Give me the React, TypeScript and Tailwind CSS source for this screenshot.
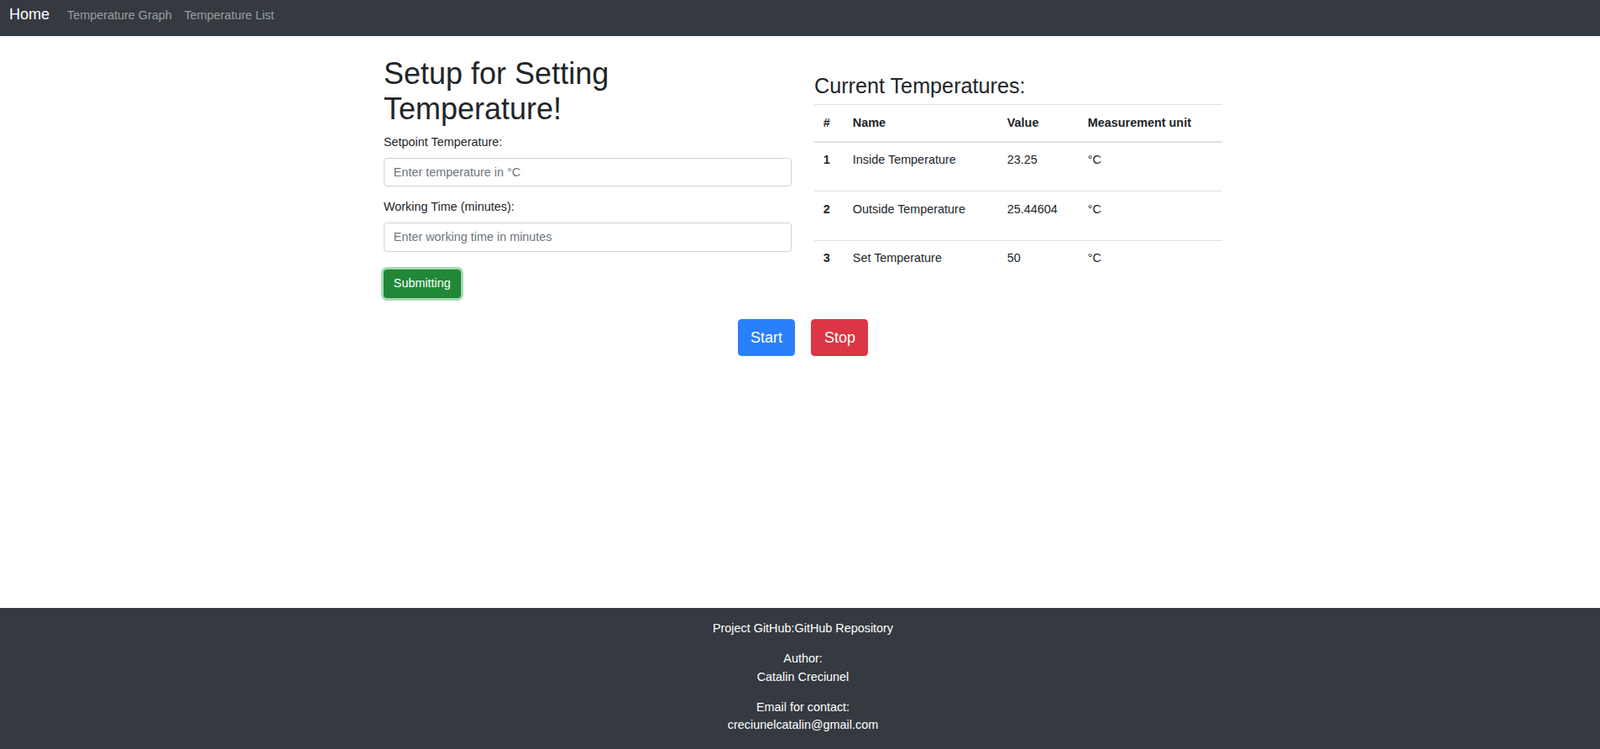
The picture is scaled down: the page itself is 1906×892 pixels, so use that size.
import React from "react";

const font = { fontFamily: '"Liberation Sans", Arial, sans-serif' };

export default function App() {
  const rows = [
    { n: "1", name: "Inside Temperature", value: "23.25", unit: "°C" },
    { n: "2", name: "Outside Temperature", value: "25.44604", unit: "°C" },
    { n: "3", name: "Set Temperature", value: "50", unit: "°C" },
  ];
  return (
    <div className="min-h-screen flex flex-col bg-white text-[#212529] font-['Liberation_Sans',Arial,sans-serif]" style={font}>
      <nav className="h-[43px] bg-[#343a40] flex items-baseline pt-[6.5px] shrink-0">
        <span className="ml-[11px] text-[18px] leading-[20px] text-white">Home</span>
        <span className="ml-[21px] text-[14.4px] leading-[20px] text-white/50">Temperature Graph</span>
        <span className="ml-[14.6px] text-[14.4px] leading-[20px] text-white/50">Temperature List</span>
      </nav>

      <main className="flex-1 pl-[7px]">
        <div className="w-[999px] mx-auto">
          <div className="grid grid-cols-2 gap-[27px] items-start mt-[23.6px]">
            <div>
              <h1 className="text-[36px] leading-[42px] font-normal mb-[8.2px] text-[#212529]">
                Setup for Setting Temperature!
              </h1>
              <label className="block text-[14.4px] leading-[21.6px] mb-[7.2px]">Setpoint Temperature:</label>
              <input
                type="text"
                placeholder="Enter temperature in °C"
                className="block w-full h-[34.2px] px-[10.8px] py-[5.4px] text-[14.4px] leading-[21.6px] border border-[#ced4da] rounded-[3.6px] placeholder:text-[#6c757d] outline-none"
              />
              <label className="block mt-[14.6px] text-[14.4px] leading-[21.6px] mb-[7.4px]">Working Time (minutes):</label>
              <input
                type="text"
                placeholder="Enter working time in minutes"
                className="block w-full h-[34.2px] px-[10.8px] py-[5.4px] text-[14.4px] leading-[21.6px] border border-[#ced4da] rounded-[3.6px] placeholder:text-[#6c757d] outline-none"
              />
              <button className="mt-[21.4px] px-[10.8px] py-[5.4px] text-[14.4px] leading-[21.6px] text-white bg-[#218838] border border-[#1e7e34] rounded-[3.6px] shadow-[0_0_0_2.9px_rgba(72,180,97,0.5)]">
                Submitting
              </button>
            </div>
            <div>
              <h3 className="mt-[20.4px] text-[25.2px] leading-[30.24px] font-normal mb-[6.4px]">Current Temperatures:</h3>
              <table className="w-full border-collapse table-fixed text-[14.4px] leading-[21.6px]">
                <thead>
                  <tr>
                    <th className="w-[35px] text-left align-bottom font-bold px-[10.8px] pt-[11.4px] pb-[10.2px] border-t border-b-2 border-[#dee2e6]">#</th>
                    <th className="w-[184px] text-left align-bottom font-bold px-[10.8px] pt-[11.4px] pb-[10.2px] border-t border-b-2 border-[#dee2e6]">Name</th>
                    <th className="w-[96px] text-left align-bottom font-bold px-[10.8px] pt-[11.4px] pb-[10.2px] border-t border-b-2 border-[#dee2e6]">Value</th>
                    <th className="text-left align-bottom font-bold px-[10.8px] pt-[11.4px] pb-[10.2px] border-t border-b-2 border-[#dee2e6]">Measurement unit</th>
                  </tr>
                </thead>
                <tbody>
                  {rows.map((r) => (
                    <tr key={r.n}>
                      <th className="text-left align-top font-bold px-[10.8px] pt-[10.4px] pb-[11.2px] border-t border-[#dee2e6]">
                        <p className="mb-[14.4px]">{r.n}</p>
                      </th>
                      <td className="align-top px-[10.8px] pt-[10.4px] pb-[11.2px] border-t border-[#dee2e6]">
                        <p className="mb-[14.4px]">{r.name}</p>
                      </td>
                      <td className="align-top px-[10.8px] pt-[10.4px] pb-[11.2px] border-t border-[#dee2e6]">
                        <p className="mb-[14.4px]">{r.value}</p>
                      </td>
                      <td className="align-top px-[10.8px] pt-[10.4px] pb-[11.2px] border-t border-[#dee2e6]">
                        <p className="mb-[14.4px]">{r.unit}</p>
                      </td>
                    </tr>
                  ))}
                </tbody>
              </table>
            </div>
          </div>
          <div className="flex justify-center gap-[19px] mt-[25.2px]">
            <button className="px-[14.4px] py-[7.2px] text-[18px] leading-[27px] text-white bg-[#2a7ffb] border border-[#2a7ffb] rounded-[4.3px]">
              Start
            </button>
            <button className="px-[14.4px] py-[7.2px] text-[18px] leading-[27px] text-white bg-[#dc3545] border border-[#dc3545] rounded-[4.3px]">
              Stop
            </button>
          </div>
        </div>
      </main>

      <footer className="h-[168px] shrink-0 bg-[#343a40] text-white text-center text-[14.4px] leading-[21.6px] pt-[14px] pl-[7px]">
        <p className="mb-[14.4px]">Project GitHub:GitHub Repository</p>
        <p className="mb-[14.4px]">
          Author:
          <br />
          Catalin Creciunel
        </p>
        <p className="mb-[14.4px]">
          Email for contact:
          <br />
          creciunelcatalin@gmail.com
        </p>
      </footer>
    </div>
  );
}
